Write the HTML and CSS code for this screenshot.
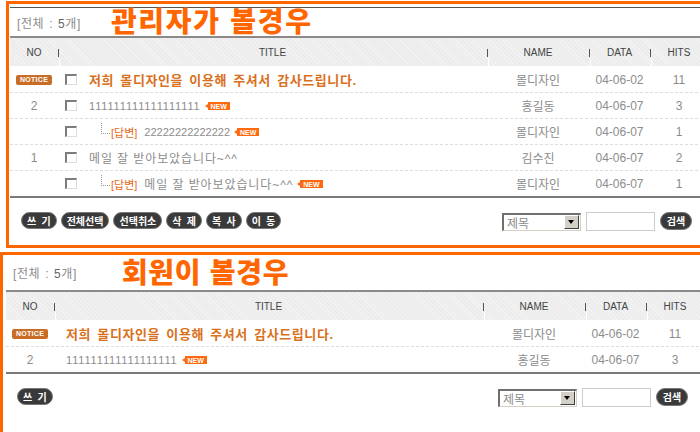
FILE: index.html
```html
<!DOCTYPE html>
<html>
<head>
    <title>게시판 - 관리자 / 회원 화면</title>
    <link rel="stylesheet" href="styles.css">
</head>
<body>
    <div class="board board-admin">
        <div class="board-top">
            <span class="total">[전체 : <b>5</b>개]</span>
            <h2 class="case-title">관리자가 볼경우</h2>
        </div>
        <div class="list">
            <div class="row head">
                <span>NO</span><span>TITLE</span><span>NAME</span><span>DATA</span><span>HITS</span>
            </div>
            <div class="row item">
                <span class="no"><span class="badge-notice">NOTICE</span></span>
                <span class="title"><i class="check"></i><strong class="notice-text">저희 몰디자인을 이용해 주셔서 감사드립니다.</strong></span>
                <span>몰디자인</span><span class="num">04-06-02</span><span class="num">11</span>
            </div>
            <div class="row item">
                <span class="no num">2</span>
                <span class="title"><i class="check"></i><span class="num ones">111111111111111111</span><em class="badge-new">NEW</em></span>
                <span>홍길동</span><span class="num">04-06-07</span><span class="num">3</span>
            </div>
            <div class="row item">
                <span class="no"></span>
                <span class="title"><i class="check"></i><i class="tree"></i><span class="re">[답변]</span><span class="num twos">22222222222222</span><em class="badge-new">NEW</em></span>
                <span>몰디자인</span><span class="num">04-06-07</span><span class="num">1</span>
            </div>
            <div class="row item">
                <span class="no num">1</span>
                <span class="title"><i class="check"></i><span class="subject">메일 잘 받아보았습니다~^^</span></span>
                <span>김수진</span><span class="num">04-06-07</span><span class="num">2</span>
            </div>
            <div class="row item">
                <span class="no"></span>
                <span class="title"><i class="check"></i><i class="tree"></i><span class="re">[답변]</span><span class="subject">메일 잘 받아보았습니다~^^</span><em class="badge-new">NEW</em></span>
                <span>몰디자인</span><span class="num">04-06-07</span><span class="num">1</span>
            </div>
        </div>
        <div class="board-foot">
            <div class="btns">
                <button class="pill">쓰 기</button>
                <button class="pill">전체선택</button>
                <button class="pill">선택취소</button>
                <button class="pill">삭 제</button>
                <button class="pill">복 사</button>
                <button class="pill">이 동</button>
            </div>
            <div class="search">
                <div class="fake-select"><span>제목</span><i class="drop"></i></div>
                <input class="keyword" type="text">
                <button class="pill pill-search">검색</button>
            </div>
        </div>
    </div>

    <div class="board board-member">
        <div class="board-top">
            <span class="total">[전체 : <b>5</b>개]</span>
            <h2 class="case-title">회원이 볼경우</h2>
        </div>
        <div class="list">
            <div class="row head">
                <span>NO</span><span>TITLE</span><span>NAME</span><span>DATA</span><span>HITS</span>
            </div>
            <div class="row item">
                <span class="no"><span class="badge-notice">NOTICE</span></span>
                <span class="title"><strong class="notice-text">저희 몰디자인을 이용해 주셔서 감사드립니다.</strong></span>
                <span>몰디자인</span><span class="num">04-06-02</span><span class="num">11</span>
            </div>
            <div class="row item">
                <span class="no num">2</span>
                <span class="title"><span class="num ones">111111111111111111</span><em class="badge-new">NEW</em></span>
                <span>홍길동</span><span class="num">04-06-07</span><span class="num">3</span>
            </div>
        </div>
        <div class="board-foot">
            <div class="btns">
                <button class="pill">쓰 기</button>
            </div>
            <div class="search">
                <div class="fake-select"><span>제목</span><i class="drop"></i></div>
                <input class="keyword" type="text">
                <button class="pill pill-search">검색</button>
            </div>
        </div>
    </div>
</body>
</html>
```
FILE: styles.css
```css
html, body {
    overflow: hidden;
}

body {
    margin: 0;
    font-family: "Liberation Sans", "Noto Sans CJK KR", sans-serif;
    font-size: 12px;
    color: #8c8c8c;
    background-color: #ffffff;
}

.board {
    width: 698px;
    border: 3px solid #ff6600;
    background-color: #ffffff;
}

.board-admin {
    margin: 1px 0 0 6px;
    padding: 3px 0 0 1px;
}

.board-member {
    margin: 4px 0 0 0;
    padding: 0 0 0 3px;
}

/* summary + big caption */
.board-top {
    display: flex;
    align-items: center;
    height: 28px;
    padding-left: 7px;
}

.board-admin .board-top {
    border-top: 1px solid #555555;
}

.board-member .board-top {
    height: 35px;
    padding-left: 7px;
}

.total {
    color: #8c8c8c;
    font-size: 12px;
    letter-spacing: 0.6px;
    word-spacing: 1px;
}

.total b {
    font-weight: normal;
    color: #666666;
}

.case-title {
    margin: 2px 0 0 30px;
    font-size: 28px;
    line-height: 28px;
    font-weight: 900;
    letter-spacing: 1.7px;
    color: #ff6600;
}

.board-member .case-title {
    margin-left: 45px;
    letter-spacing: 0.7px;
}

/* list */
.list {
    border-top: 2px solid #8a8a8a;
    border-bottom: 2px solid #7a7a7a;
}

.row {
    display: grid;
    grid-template-columns: 48px 429px 102px 61px 58px;
    align-items: center;
}

.row > span {
    text-align: center;
    white-space: nowrap;
}

.head {
    height: 28px;
    border-bottom: 1px solid #ffffff;
    background-color: #ececec;
    background-image: repeating-linear-gradient(45deg, rgba(255,255,255,0.35) 0 1px, transparent 1px 3px);
    color: #444444;
    font-size: 10px;
}

.head > span {
    position: relative;
    height: 28px;
    line-height: 29px;
}

.head > span + span::before {
    content: "";
    position: absolute;
    left: 0;
    top: 11px;
    width: 1px;
    height: 8px;
    background-color: #555555;
}

.head > span + span::after {
    content: "";
    position: absolute;
    left: 1px;
    top: 20px;
    bottom: 0;
    width: 1px;
    background-color: #ffffff;
}

.item {
    height: 25px;
    border-bottom: 1px dashed #dcdcdc;
}

.item:last-child {
    border-bottom: none;
}

.num {
    font-size: 12px;
}

.ones {
    font-size: 11px;
    letter-spacing: 0.85px;
}

.twos {
    font-size: 11px;
}

.subject {
    letter-spacing: 0.9px;
}

.row > .title {
    display: flex;
    align-items: center;
    text-align: left;
    padding-left: 7px;
}

.board-member .row > .title {
    padding-left: 12px;
}

.check {
    display: inline-block;
    box-sizing: border-box;
    width: 12px;
    height: 11px;
    margin-right: 12px;
    border-top: 2px solid #7c7c7c;
    border-left: 2px solid #7c7c7c;
    border-right: 1px solid #dddddd;
    border-bottom: 1px solid #dddddd;
    background-color: #ffffff;
}

.notice-text {
    color: #d9701c;
    font-size: 13px;
    letter-spacing: 0.6px;
    word-spacing: 2px;
}

.badge-notice {
    display: inline-block;
    padding: 0 4px;
    height: 10px;
    line-height: 10px;
    border-radius: 2px;
    background-color: #c96d26;
    color: #ffffff;
    font-size: 7px;
    font-weight: bold;
    letter-spacing: 0.3px;
    vertical-align: middle;
}

.badge-new {
    position: relative;
    display: inline-block;
    margin-left: 7px;
    padding: 0 3px;
    height: 8px;
    line-height: 9px;
    background-color: #ff6a10;
    color: #ffffff;
    font-size: 7px;
    font-style: normal;
    font-weight: bold;
    letter-spacing: 0;
}

.badge-new::before {
    content: "";
    position: absolute;
    left: -3px;
    top: 2px;
    border-top: 2px solid transparent;
    border-bottom: 2px solid transparent;
    border-right: 3px solid #ff6a10;
}

.tree {
    display: inline-block;
    width: 8px;
    height: 10px;
    margin: 0 1px 0 12px;
    border-left: 1px dotted #999999;
    border-bottom: 1px dotted #999999;
    transform: translateY(-3px);
}

.re {
    color: #e8691b;
    font-size: 11px;
    margin-right: 7px;
}

/* footer */
.board-foot {
    display: flex;
    justify-content: space-between;
    align-items: flex-start;
    height: 33px;
    padding: 14px 16px 0 11px;
}

.board-member .board-foot {
    height: 60px;
}

.btns {
    display: flex;
    gap: 4px;
}

.pill {
    height: 17px;
    padding: 0 5px;
    border: 1px solid #777777;
    border-radius: 9px;
    background-color: #3a3a3a;
    color: #ffffff;
    font-family: "Noto Sans CJK KR", sans-serif;
    font-size: 10px;
    font-weight: bold;
    line-height: 14px;
    word-spacing: 3px;
}

.search {
    display: flex;
    align-items: center;
    gap: 5px;
}

.fake-select {
    display: flex;
    justify-content: space-between;
    align-items: center;
    box-sizing: border-box;
    width: 79px;
    height: 18px;
    padding: 0 1px 0 3px;
    border-top: 2px solid #6f6f6f;
    border-left: 2px solid #6f6f6f;
    border-right: 1px solid #d4d0c8;
    border-bottom: 1px solid #d4d0c8;
    color: #8c8c8c;
    font-size: 12px;
}

.drop {
    position: relative;
    box-sizing: border-box;
    width: 15px;
    height: 14px;
    border-top: 1px solid #ffffff;
    border-left: 1px solid #ffffff;
    border-right: 1px solid #404040;
    border-bottom: 1px solid #404040;
    background-color: #d4d0c8;
}

.drop::after {
    content: "";
    position: absolute;
    left: 3px;
    top: 4px;
    border-left: 3px solid transparent;
    border-right: 3px solid transparent;
    border-top: 4px solid #000000;
}

.keyword {
    box-sizing: border-box;
    width: 69px;
    height: 19px;
    margin: 0;
    border: 1px solid #cccccc;
}

.pill-search {
    width: 32px;
    height: 18px;
    padding: 0;
    margin-top: -1px;
}
```
